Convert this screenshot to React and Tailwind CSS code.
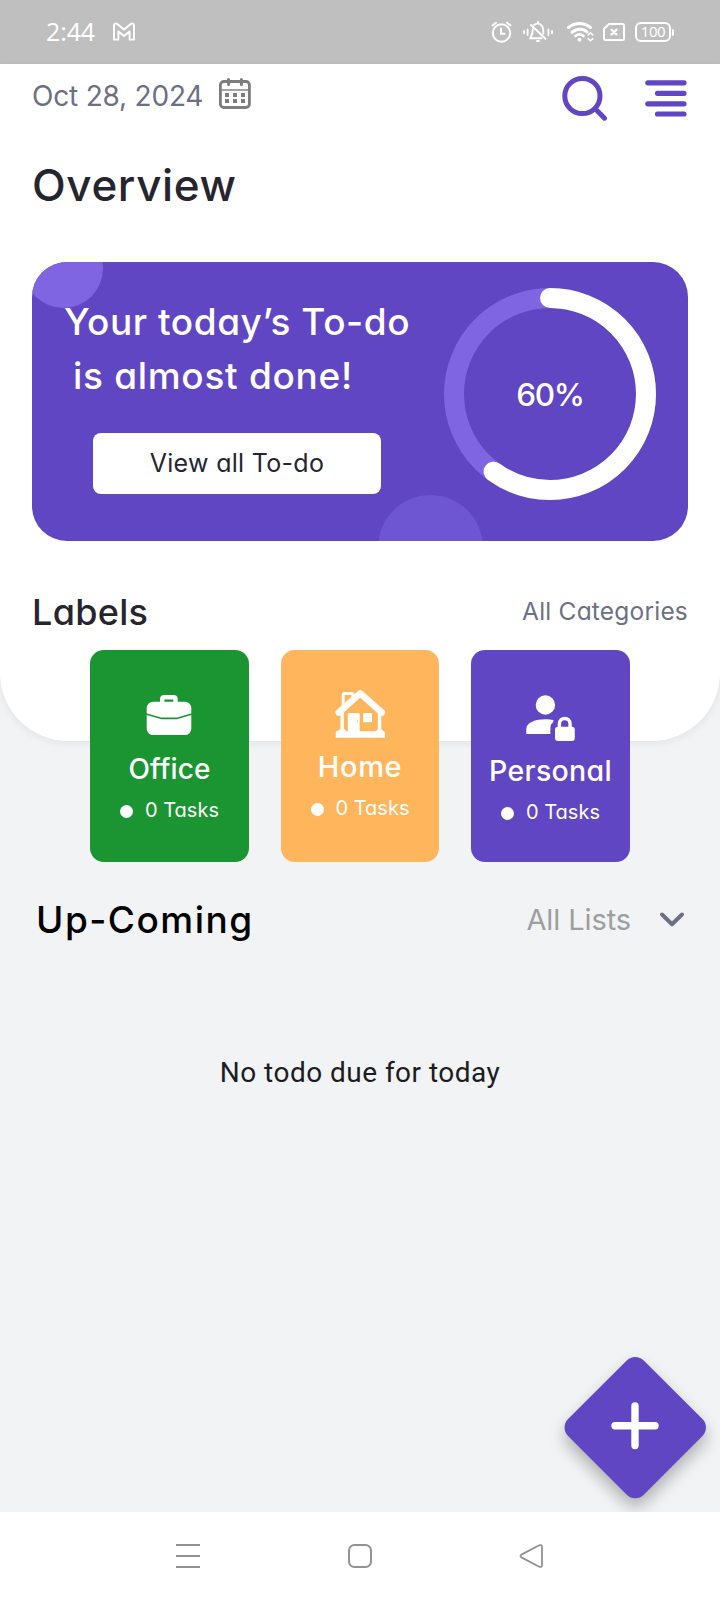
const poppy = "font-['Inter',sans-serif] [font-feature-settings:'cv11'] whitespace-nowrap";

function StatusBar() {
  return (
    <header className="flex h-16 shrink-0 items-center justify-between bg-[#bfbfbf] pl-[46px] pr-[46px] text-white">
      <div className="flex items-center gap-[17px]">
        <span className="-mt-[2px] font-['Open_Sans',sans-serif] text-[25px] leading-8 tracking-[-0.1px]">2:44</span>
        <svg width="24" height="20" viewBox="0 0 24 20" fill="none" stroke="currentColor" strokeWidth="1.9" strokeLinejoin="round">
          <path d="M2 3.2C2 1.4 4 1 5.2 2L12 7.6L18.8 2C20 1 22 1.4 22 3.2V17.6H17.6V9.4L12 14L6.4 9.4V17.6H2Z" />
        </svg>
      </div>
      <div className="flex items-center">
        <svg width="148" height="30" viewBox="484 17 148 30" fill="none" stroke="currentColor" strokeWidth="2" strokeLinecap="round">
          <circle cx="501.5" cy="33" r="8.7" />
          <path d="M501 28.5V33.8H504.5M492.5 25.5L496 22.8M510.5 25.5L507 22.8" />
          <path d="M524 31V33.2M527.6 29.5V35M552 31V33.2M548.4 29.5V35" strokeWidth="1.8" />
          <path d="M531 25L545.5 38.8M534.2 24.8C540 21.5 544 26 543.3 33.5M532.8 29.5C532.8 34 531.5 36 530.3 38.2H541.5" strokeWidth="1.9" />
          <path d="M538 22V23M537 41H539" />
          <path d="M568.5 27.5C575 22 584 22 590.5 27.5" strokeWidth="3" />
          <path d="M572 32.3C576.5 28.3 583 28.3 587 32" strokeWidth="3" />
          <path d="M575.5 36C578 34 581 34 583.5 36" strokeWidth="2.6" />
          <circle cx="579.5" cy="39.8" r="2" fill="currentColor" stroke="none" />
          <path d="M588.2 35L590.5 32.8L592.8 35M588.2 38.6L590.5 40.8L592.8 38.6" strokeWidth="1.5" />
          <path d="M609 24H622.5Q624 24 624 25.5V38.5Q624 40 622.5 40H605.5Q604 40 604 38.5V28.8Z" strokeLinejoin="round" />
          <path d="M611.6 29.8L616.4 34.4M616.4 29.8L611.6 34.4" strokeWidth="2.3" />
        </svg>
        <div className="ml-[3px] flex h-5 w-9 items-center justify-center rounded-[6px] border-2 border-white pb-px font-['Open_Sans',sans-serif] text-[15px] leading-none tracking-[-0.4px]">
          100
        </div>
        <div className="ml-px h-[7px] w-[2px] rounded-r bg-white" />
      </div>
    </header>
  );
}

function TopRow() {
  return (
    <div className="flex h-16 justify-between pl-8 pr-[33px]">
      <div className="flex h-16 items-center">
        <span className={`${poppy} text-[28px] tracking-[-0.2px] text-[#6b7085]`}>Oct 28, 2024</span>
        <svg className="mb-[5px] ml-[15px]" width="34" height="34" viewBox="0 0 34 34" fill="none" stroke="#7d7d7d" strokeWidth="2.8">
          <rect x="2.4" y="4.5" width="29" height="26" rx="3.5" />
          <path d="M10.6 2.5V7.5M23.4 2.5V7.5" strokeWidth="3" strokeLinecap="round" />
          <path d="M3 13H31" strokeWidth="1.4" />
          <path d="M7 18H11M15 18H19M23 18H27M7 24H11M15 24H19M23 24H27" strokeWidth="4" />
        </svg>
      </div>
      <div className="flex items-start gap-[37px] pt-[11px]">
        <svg width="48" height="48" viewBox="0 0 48 48" fill="none" stroke="#6046c3" strokeWidth="5" strokeLinecap="round">
          <circle cx="22.4" cy="21" r="17.6" />
          <path d="M35.5 34L44.5 43.2" />
        </svg>
        <svg className="mt-[3px]" width="42" height="42" viewBox="0 0 42 42" fill="none" stroke="#6046c3" strokeWidth="5.2" strokeLinecap="round">
          <path d="M2.8 4.8H39M12.5 15.3H39M2.8 25.8H39M12.5 36H39" />
        </svg>
      </div>
    </div>
  );
}

function ProgressCard() {
  return (
    <section className="relative mx-8 mt-[21px] flex h-[278.5px] shrink-0 overflow-hidden rounded-[35px] bg-[#6046c3]">
      <div className="absolute -left-2 -top-[33px] size-[79px] rounded-full bg-[#8065e2]" />
      <div className="absolute left-[346px] top-[233px] size-[105px] rounded-full bg-[#6e55d2]" />
      <div className={`${poppy} relative w-[412px] pt-[32.5px] text-[37px] font-medium leading-[54px] text-white`}>
        <p className="pl-8 tracking-[0.55px]">Your today’s To-do</p>
        <p className="pl-[41px] tracking-[0.7px]">is almost done!</p>
        <button className="ml-[61px] mt-[30px] flex h-[61px] w-[288px] items-center justify-center rounded-[8px] bg-white text-[25px] font-normal leading-none tracking-[0.3px] text-[#26252f]">
          View all To-do
        </button>
      </div>
      <div className="mt-[26px] grid size-[212px] place-items-center">
        <svg className="col-start-1 row-start-1" width="212" height="212" viewBox="0 0 212 212" fill="none" strokeWidth="20">
          <circle cx="106" cy="106" r="96" stroke="#8065e2" />
          <circle cx="106" cy="106" r="96" stroke="#fff" strokeLinecap="round" pathLength="100" strokeDasharray="60 100" transform="rotate(-90 106 106)" />
        </svg>
        <span className={`${poppy} col-start-1 row-start-1 mt-[2px] text-[31.5px] font-medium leading-none tracking-[-1.4px] text-white`}>60%</span>
      </div>
    </section>
  );
}

function OfficeIcon() {
  return (
    <svg className="-ml-[2px]" width="60" height="62" viewBox="0 0 60 62" fill="none">
      <path d="M23.2 17V13.2Q23.2 11.2 25.2 11.2H34.5Q36.5 11.2 36.5 13.2V17" stroke="#fff" strokeWidth="4.4" />
      <rect x="7.7" y="15.7" width="44.6" height="33.4" rx="6.5" fill="#fff" />
      <path d="M7 28L22.7 32.4H37.7L53 28" stroke="#1a9532" strokeWidth="1.6" />
    </svg>
  );
}

function HomeIcon() {
  return (
    <svg width="60" height="60" viewBox="0 0 60 60" fill="none" stroke="#fff" strokeLinejoin="round" strokeLinecap="round">
      <path d="M13.2 21V9Q13.2 7.4 14.8 7.4H21.5Q23 7.4 23 9V11" strokeWidth="3" />
      <path d="M8.8 26.5L30.2 7.4L51.8 26.5" strokeWidth="6.6" />
      <path d="M12.2 27V46M49.6 27V46" strokeWidth="3.4" />
      <path d="M5.7 51.7V46.5Q5.7 44.8 8 44.8L10.5 43H14.5L16 45.2H46L48 43H51.3L53 44.8Q55 45.4 55 47V51.7Z" fill="#fff" stroke="none" />
      <path d="M17.8 46V28.5Q17.8 27 19.3 27H28.2Q29.7 27 29.7 28.5V46Z" fill="#fff" stroke="none" />
      <rect x="33" y="27" width="9" height="9.3" rx="1" fill="#fff" stroke="none" />
      <circle cx="27.7" cy="35.3" r="0.7" fill="#ffb55c" stroke="none" />
    </svg>
  );
}

function PersonalIcon() {
  return (
    <svg className="-ml-[2px]" width="60" height="64" viewBox="0 0 60 64" fill="#fff">
      <circle cx="25.4" cy="19" r="9.7" />
      <path d="M6.3 48V43C6.3 36.5 15.5 33.3 25.5 33.3C28.5 33.3 31 33.5 33.5 34.1C33.4 35.8 32.6 37.4 31 38.5C30.4 40 30.4 42 30.4 48Z" />
      <rect x="35" y="40.7" width="19.8" height="14.4" rx="3" />
      <path d="M39.4 42V38C39.4 30.6 50.1 30.6 50.1 38V42" fill="none" stroke="#fff" strokeWidth="3.4" />
    </svg>
  );
}

function LabelCard({ color, icon, name, nameClass }) {
  return (
    <article className={`${poppy} flex h-[211.5px] w-[158.5px] flex-col items-center rounded-[14px] pt-9 text-white ${color}`}>
      {icon}
      <h3 className={`flex h-[42px] items-center font-medium ${nameClass}`}>{name}</h3>
      <p className="flex h-[39px] items-center gap-[12px] text-[20px]">
        <span className="mt-1 size-[13px] rounded-full bg-white" />
        0 Tasks
      </p>
    </article>
  );
}

function AddButton() {
  return (
    <button className="absolute bottom-[31.5px] right-[31.5px] grid size-[107px] place-items-center" aria-label="Add">
      <span className="col-start-1 row-start-1 size-[106.5px] rotate-45 rounded-[12px] bg-[#6046c3] shadow-[6px_6px_16px_rgba(0,0,0,0.28)]" />
      <svg className="relative col-start-1 row-start-1" width="48" height="50" viewBox="0 0 48 50" stroke="#fff" strokeWidth="7.4" strokeLinecap="round">
        <path d="M24 4V43.6M4 23.8H44" />
      </svg>
    </button>
  );
}

function NavBar() {
  return (
    <nav className="relative flex h-[88px] shrink-0 items-center justify-between bg-white px-[175px]">
      <svg width="26" height="26" viewBox="0 0 26 26" stroke="#929292" strokeWidth="2">
        <path d="M1 2H25M1 13H25M1 24H25" />
      </svg>
      <svg width="26" height="26" viewBox="0 0 26 26" fill="none" stroke="#929292" strokeWidth="2">
        <rect x="2" y="2" width="22" height="22" rx="5.5" />
      </svg>
      <svg width="26" height="26" viewBox="0 0 26 26" fill="none" stroke="#929292" strokeWidth="1.8" strokeLinejoin="round">
        <path d="M2.4 11.6L20.2 2.3Q23 1.4 23 4V22Q23 24.6 20.2 23.7L2.4 14.4Q0.6 13 2.4 11.6Z" />
      </svg>
    </nav>
  );
}

export default function App() {
  return (
    <div className="flex h-[1600px] w-[720px] flex-col overflow-hidden bg-[#f1f3f5]">
      <StatusBar />
      <main className="relative flex min-h-0 flex-1 flex-col">
        <div className="h-[677px] shrink-0 rounded-b-[68px] bg-white shadow-[0_2px_8px_rgba(0,0,0,0.07)]">
          <TopRow />
          <h1 className={`${poppy} flex h-[113px] items-center px-8 text-[44px] font-medium tracking-[0.6px] text-[#26252f]`}>Overview</h1>
          <ProgressCard />
          <div className={`${poppy} flex h-[109.5px] items-center justify-between px-8 pt-[33px]`}>
            <h2 className="text-[36px] font-medium tracking-[0.3px] text-[#26252f]">Labels</h2>
            <a className="text-[24.5px] tracking-[0.2px] text-[#6b7085]">All Categories</a>
          </div>
          <div className="flex justify-center gap-8">
            <LabelCard color="bg-[#1a9532]" icon={<OfficeIcon />} name="Office" nameClass="text-[28px] tracking-[0.1px]" />
            <LabelCard color="bg-[#ffb55c]" icon={<HomeIcon />} name="Home" nameClass="text-[29px] tracking-[0.6px]" />
            <LabelCard color="bg-[#6046c3]" icon={<PersonalIcon />} name="Personal" nameClass="text-[28.5px] tracking-[0.3px]" />
          </div>
        </div>
        <div className={`${poppy} mt-[153px] flex h-[51px] items-center justify-between pl-9 pr-[35px]`}>
          <h2 className="text-[37px] font-medium tracking-[1.5px] text-black">Up-Coming</h2>
          <div className="flex items-center gap-[28px]">
            <span className="text-[29px] tracking-[-0.1px] text-[#9e9e9e]">All Lists</span>
            <svg width="26" height="18" viewBox="0 0 26 18" fill="none" stroke="#6b7085" strokeWidth="4" strokeLinecap="round" strokeLinejoin="round">
              <path d="M3 3.5L13 13.2L23 3.5" />
            </svg>
          </div>
        </div>
        <p className="mt-[108px] text-center font-['Roboto',sans-serif] text-[28px] leading-[40px] tracking-[0.47px] text-[#1c1b1f]">
          No todo due for today
        </p>
        <AddButton />
      </main>
      <NavBar />
    </div>
  );
}
